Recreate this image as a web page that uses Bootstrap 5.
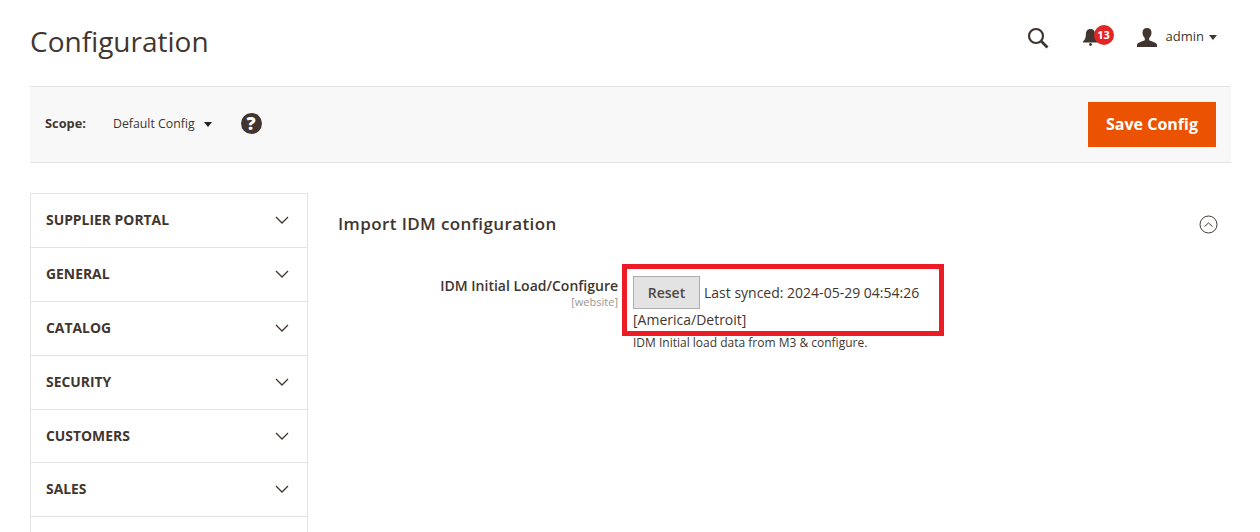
<!DOCTYPE html>
<html lang="en">
<head>
  <meta charset="UTF-8" />
  <title>Configuration</title>
  <link href="https://cdn.jsdelivr.net/npm/bootstrap@5.3.0/dist/css/bootstrap.min.css" rel="stylesheet" />
  <style>
    html, body { height: 532px; overflow: hidden; }
    body { font-family: "Open Sans", sans-serif; font-size: 14px; color: #41362f; background: #fff; }
    .page-wrap { padding: 0 29px 0 30px; }
    .top-bar { height: 86px; }
    .page-name { font-size: 28px; font-weight: 400; line-height: 36px; margin: 0; padding-bottom: 4px; color: #41362f; }
    .top-tools { padding: 0 14px 12px 0; }
    .search-ico { margin: 2px 34px 0 0; }
    .bell-box { position: relative; width: 30px; height: 24px; margin-right: 24px; }
    .bell-box svg { position: absolute; left: -1px; top: 3px; }
    .bell-count { position: absolute; left: 11px; top: 0; width: 20px; height: 20px; border-radius: 50%; background: #e22626; color: #fff; font-size: 11px; font-weight: 700; line-height: 20px; text-align: center; }
    .admin-name { font-size: 13px; color: #41362f; margin: 0 5px 0 9px; }
    .caret-down { width: 0; height: 0; border-left: 4px solid transparent; border-right: 4px solid transparent; border-top: 5px solid #41362f; }
    .scope-bar { height: 77px; background: #f8f8f8; border-top: 1px solid #e3e3e3; border-bottom: 1px solid #e3e3e3; padding: 0 15px; }
    .scope-left { margin-bottom: 2px; }
    .scope-label { font-size: 12.800px; font-weight: 700; width: 68px; }
    .scope-value { font-size: 12.300px; margin-right: 9px; padding-top: 2px; }
    .scope-left .caret-down { border-top-color: #222; margin: 2px 29px 0 0; }
    .help-dot { width: 21px; height: 21px; border-radius: 50%; background: #41362f; color: #fff; font-weight: 800; font-size: 18px; line-height: 21px; text-align: center; }
    .save-btn { width: 128px; height: 45px; background: #eb5202; border: 1px solid #eb5202; border-radius: 0; color: #fff; font-size: 16px; font-weight: 700; padding: 0 0 2px; }
    .save-btn:hover { background: #ba4000; color: #fff; }
    .main-area { margin-top: 30px; height: 339px; overflow: hidden; }
    .side-col { width: 278px; flex: none; }
    .tab-list { height: 100%; border: 1px solid #e3e3e3; border-bottom: 0; }
    .tab-row { height: 54px; padding: 0 18px 2px 15px; border-bottom: 1px solid #e3e3e3; font-size: 13.900px; font-weight: 700; color: #41362f; }
    .tab-row span { margin-top: 2px; }
    .tab-row.tab-short { height: 53px; }
    .tab-short svg { margin-top: 2px; }
    .content-col { padding: 0 13px 0 30px; }
    .section-head { padding-top: 17px; height: 61px; }
    .section-title { font-size: 17px; font-weight: 600; letter-spacing: .4px; line-height: 28px; margin: 0; color: #41362f; }
    .toggle-ico { margin-top: 5px; }
    .field-row { margin-top: 10px; }
    .field-label { width: 280px; flex: none; text-align: right; padding-top: 12px; font-size: 14px; font-weight: 600; line-height: 20px; }
    .scope-note { font-size: 11px; font-weight: 400; color: #9c948e; line-height: 11px; }
    .field-value { margin-left: 15px; width: 320px; position: relative; padding-top: 12px; }
    .red-frame { position: absolute; left: -11px; top: 0; width: 322px; height: 72px; border: 5px solid #ed1c24; pointer-events: none; }
    .reset-btn { width: 67px; height: 33px; padding: 0; background: #e3e3e3; border: 1px solid #adadad; border-radius: 0; color: #514943; font-size: 14px; font-weight: 600; }
    .reset-btn:hover { background: #dbdbdb; color: #514943; border-color: #adadad; }
    .sync-text { font-size: 14px; line-height: 20px; }
    .zone-text { margin-top: 1px; }
    .field-hint { font-size: 12px; line-height: 16px; margin-top: 5px; color: #41362f; white-space: nowrap; }
  </style>
</head>
<body>
<div class="page-wrap">
  <div class="top-bar d-flex justify-content-between align-items-center">
    <h1 class="page-name">Configuration</h1>
    <div class="top-tools d-flex align-items-center">
      <svg class="search-ico" width="22" height="22" viewBox="0 0 22 22" fill="none" stroke="#41362f">
        <circle cx="9" cy="9" r="7" stroke-width="2.200" />
        <path d="M14 14l6.500 6.500" stroke-width="2.800" />
      </svg>
      <div class="bell-box">
        <svg width="17" height="18" viewBox="0 0 17 18" fill="#41362f">
          <path d="M8.500 1c-3 0-4.600 2.200-4.600 5.200 0 3.400-.8 5.400-2.900 7.300v1h15v-1c-2.100-1.900-2.900-3.900-2.900-7.300C13.100 3.200 11.500 1 8.500 1z" />
          <circle cx="8.500" cy="16.500" r="1.400" />
        </svg>
        <span class="bell-count">13</span>
      </div>
      <svg width="20" height="19" viewBox="0 0 20 19" fill="#41362f">
        <path d="M10 0c-3 0-4.500 2-4.500 4.800 0 2.200 1 4.200 2.300 5.200v2.200C5.500 13.500 1 14 0 16.500V19h20v-2.500c-1-2.500-5.500-3-7.800-4.300V10c1.300-1 2.300-3 2.300-5.200C14.500 2 13 0 10 0z" />
      </svg>
      <span class="admin-name">admin</span>
      <span class="caret-down"></span>
    </div>
  </div>

  <div class="scope-bar d-flex align-items-center">
    <div class="scope-left d-flex align-items-center">
      <span class="scope-label">Scope:</span>
      <span class="scope-value">Default Config</span>
      <span class="caret-down"></span>
      <span class="help-dot">?</span>
    </div>
    <button type="button" class="btn save-btn ms-auto">Save Config</button>
  </div>

  <div class="main-area d-flex">
    <div class="side-col">
      <div class="tab-list">
        <div class="tab-row d-flex justify-content-between align-items-center"><span>SUPPLIER PORTAL</span><svg width="14" height="8" viewBox="0 0 14 8" fill="none" stroke="#41362f" stroke-width="1.300"><path d="M1 1l6 6 6-6" /></svg></div>
        <div class="tab-row d-flex justify-content-between align-items-center"><span>GENERAL</span><svg width="14" height="8" viewBox="0 0 14 8" fill="none" stroke="#41362f" stroke-width="1.300"><path d="M1 1l6 6 6-6" /></svg></div>
        <div class="tab-row d-flex justify-content-between align-items-center"><span>CATALOG</span><svg width="14" height="8" viewBox="0 0 14 8" fill="none" stroke="#41362f" stroke-width="1.300"><path d="M1 1l6 6 6-6" /></svg></div>
        <div class="tab-row d-flex justify-content-between align-items-center"><span>SECURITY</span><svg width="14" height="8" viewBox="0 0 14 8" fill="none" stroke="#41362f" stroke-width="1.300"><path d="M1 1l6 6 6-6" /></svg></div>
        <div class="tab-row tab-short d-flex justify-content-between align-items-center"><span>CUSTOMERS</span><svg width="14" height="8" viewBox="0 0 14 8" fill="none" stroke="#41362f" stroke-width="1.300"><path d="M1 1l6 6 6-6" /></svg></div>
        <div class="tab-row d-flex justify-content-between align-items-center"><span>SALES</span><svg width="14" height="8" viewBox="0 0 14 8" fill="none" stroke="#41362f" stroke-width="1.300"><path d="M1 1l6 6 6-6" /></svg></div>
      </div>
    </div>
    <div class="content-col flex-grow-1">
      <div class="section-head d-flex justify-content-between align-items-start">
        <h2 class="section-title">Import IDM configuration</h2>
        <svg class="toggle-ico" width="19" height="19" viewBox="0 0 19 19" fill="none" stroke="#41362f">
          <circle cx="9.500" cy="9.500" r="8.500" />
          <path d="M5.500 11.500l4-3.500 4 3.500" />
        </svg>
      </div>
      <div class="field-row d-flex">
        <div class="field-label">IDM Initial Load/Configure<div class="scope-note">[website]</div></div>
        <div class="field-value">
          <div class="d-flex align-items-center gap-1">
            <button type="button" class="btn reset-btn">Reset</button>
            <span class="sync-text">Last synced: 2024-05-29 04:54:26</span>
          </div>
          <div class="sync-text zone-text">[America/Detroit]</div>
          <div class="field-hint">IDM Initial load data from M3 &amp; configure.</div>
          <div class="red-frame"></div>
        </div>
      </div>
    </div>
  </div>
</div>
<script src="https://cdn.jsdelivr.net/npm/bootstrap@5.3.0/dist/js/bootstrap.bundle.min.js"></script>
</body>
</html>
